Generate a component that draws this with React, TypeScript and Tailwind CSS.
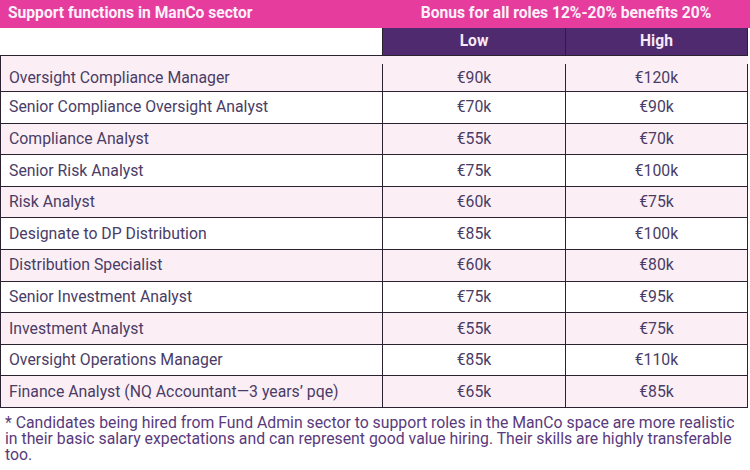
const rows: [string, string, string][] = [
  ["Oversight Compliance Manager", "€90k", "€120k"],
  ["Senior Compliance Oversight Analyst", "€70k", "€90k"],
  ["Compliance Analyst", "€55k", "€70k"],
  ["Senior Risk Analyst", "€75k", "€100k"],
  ["Risk Analyst", "€60k", "€75k"],
  ["Designate to DP Distribution", "€85k", "€100k"],
  ["Distribution Specialist", "€60k", "€80k"],
  ["Senior Investment Analyst", "€75k", "€95k"],
  ["Investment Analyst", "€55k", "€75k"],
  ["Oversight Operations Manager", "€85k", "€110k"],
  ["Finance Analyst (NQ Accountant\u20143 years\u2019 pqe)", "€65k", "€85k"],
];

export default function App() {
  return (
    <div className="h-[470px] w-[750px] overflow-hidden bg-white font-['Roboto',sans-serif] text-[15.8px]">
      {/* title bar */}
      <div className="flex h-[28px] items-center bg-[#e63c9e] text-[15.6px] font-bold text-[#fdf2fa]">
        <div className="w-[382px] pl-2">Support functions in ManCo sector</div>
        <div className="flex-1 text-center">Bonus for all roles 12%-20% benefits 20%</div>
      </div>

      {/* column header */}
      <div className="flex h-[27px]">
        <div className="w-[382px]" />
        <div className="flex w-[366px] border-x border-[#2a2230] bg-[#4f2a6f] text-[15.6px] font-bold text-[#f6e8f6]">
          <div className="flex w-[183px] items-center justify-center border-r border-[#2a2230]">Low</div>
          <div className="flex flex-1 items-center justify-center">High</div>
        </div>
      </div>

      {/* body */}
      <div className="w-[748px] border-t border-l border-[#2a2230] text-[#4a3c66]">
        {rows.map(([role, low, high], i) => (
          <div
            key={role}
            className={`flex border-b border-[#2a2230] ${i === 0 ? "h-[36px] pt-2" : "h-[31.6px]"} ${i % 2 === 0 ? "bg-[#fbeff5]" : "bg-white"}`}
          >
            <div className="flex w-[382px] items-center border-r border-[#2a2230] pl-2">{role}</div>
            <div className="flex w-[183px] items-center justify-center border-r border-[#2a2230]">{low}</div>
            <div className="flex flex-1 items-center justify-center border-r border-[#2a2230]">{high}</div>
          </div>
        ))}
      </div>

      <p className="px-[5px] pt-[7px] leading-[16px] text-[#5a3a7c]">
        * Candidates being hired from Fund Admin sector to support roles in the ManCo space are more realistic in their basic salary
        expectations and can represent good value hiring. Their skills are highly transferable too.
      </p>
    </div>
  );
}
